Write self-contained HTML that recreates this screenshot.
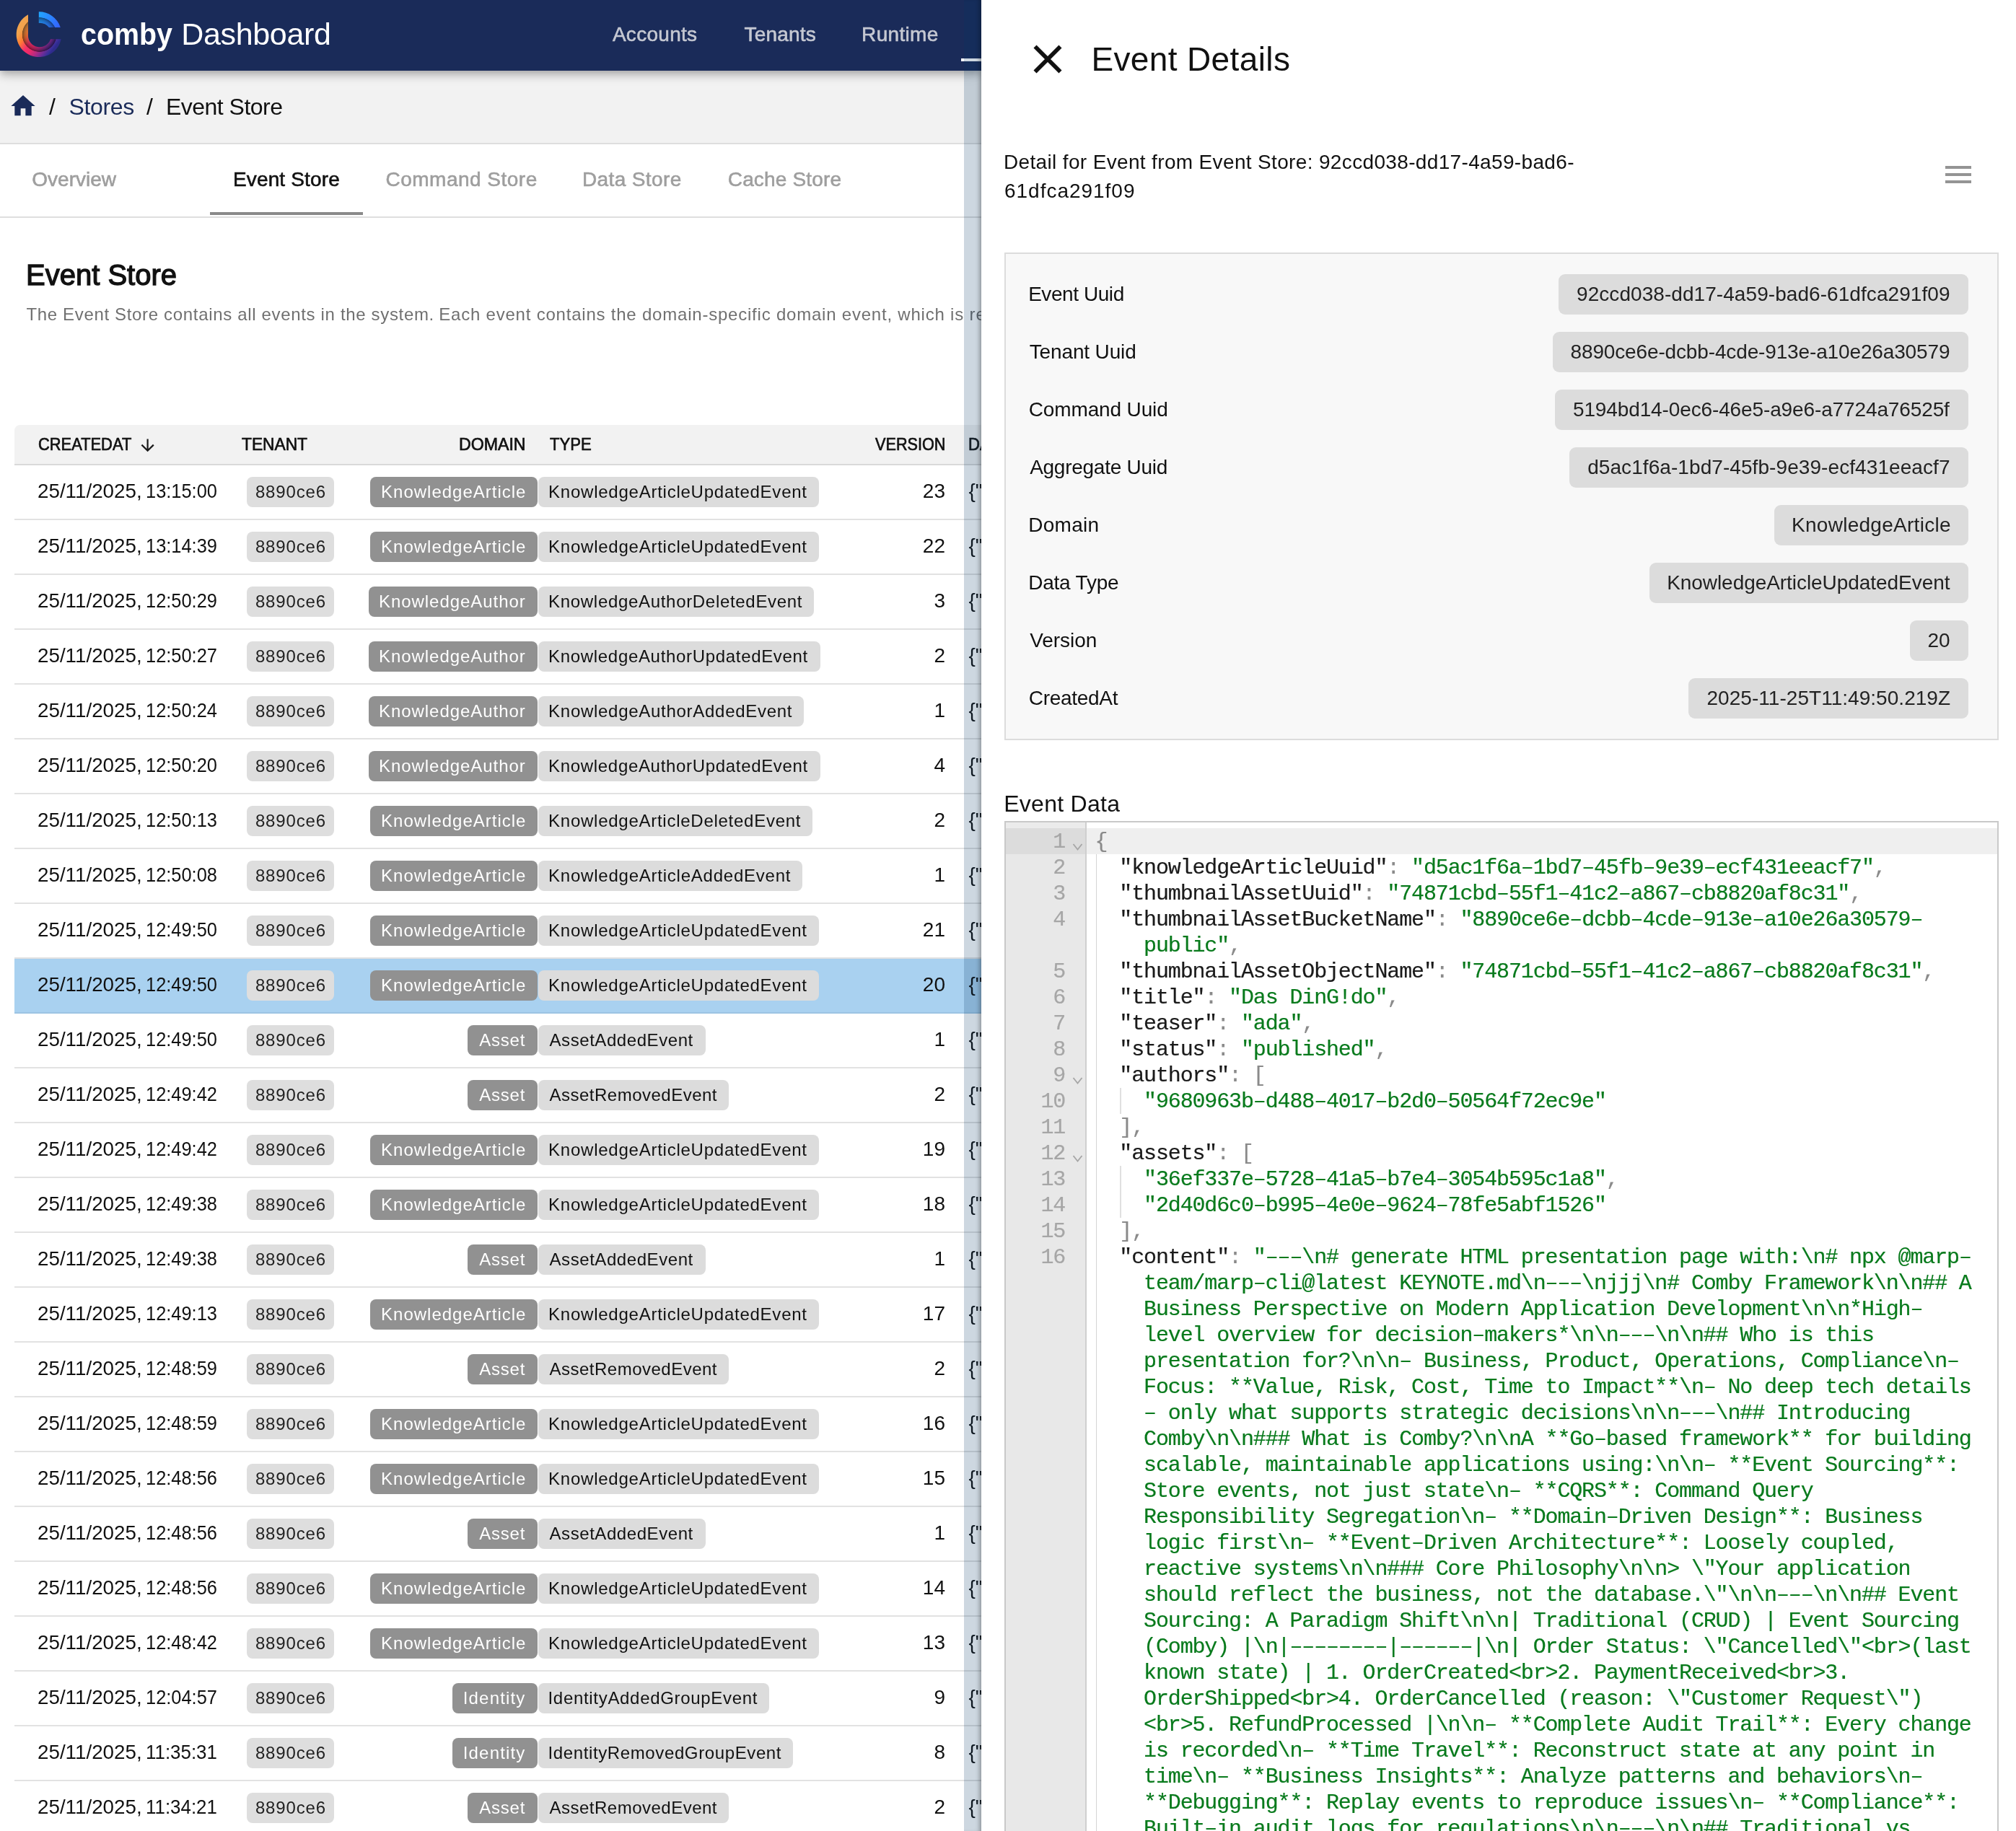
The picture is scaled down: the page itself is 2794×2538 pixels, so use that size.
<!DOCTYPE html>
<html><head><meta charset="utf-8"><title>comby Dashboard</title>
<style>
html,body{margin:0;padding:0}
body{width:2794px;height:2538px;overflow:hidden;position:relative;background:#fff;font-family:'Liberation Sans', sans-serif;}
#root{position:absolute;left:0;top:0;width:2794px;height:2538px;overflow:hidden;will-change:transform;}
</style></head><body><div id="root">
<div style="position:absolute;left:0;top:0;width:1360px;height:2538px;overflow:hidden">
<div style="position:absolute;left:0px;top:98px;width:1360px;height:100px;background:#f2f2f2;"></div>
<div style="position:absolute;left:0px;top:198px;width:1360px;height:2px;background:#dedede;"></div>
<div style="position:absolute;left:0px;top:300px;width:1360px;height:2px;background:#dedede;"></div>
<div style="position:absolute;left:0px;top:0px;width:1360px;height:98px;background:#1a2b59;box-shadow:0 4px 8px -2px rgba(0,0,0,.15),0 8px 10px 0 rgba(0,0,0,.12),0 2px 20px 0 rgba(0,0,0,.12);"></div>
<svg style="position:absolute;left:0;top:0" width="100" height="98" viewBox="0 0 100 98">
<defs>
<linearGradient id="g1" gradientUnits="userSpaceOnUse" x1="30.4" y1="22.8" x2="80" y2="60"><stop offset="0" stop-color="#f0a54f"/><stop offset=".17" stop-color="#f2a24c"/><stop offset=".32" stop-color="#ff7e33"/><stop offset=".49" stop-color="#f5306a"/><stop offset=".6" stop-color="#ee2a68"/><stop offset=".74" stop-color="#b52a84"/><stop offset=".875" stop-color="#6a2d98"/><stop offset=".97" stop-color="#35309a"/><stop offset="1" stop-color="#2f2b8c"/></linearGradient>
<linearGradient id="g2" gradientUnits="userSpaceOnUse" x1="54" y1="20" x2="84" y2="36"><stop offset="0" stop-color="#22a4ff"/><stop offset="1" stop-color="#3560ff"/></linearGradient>
<radialGradient id="g3" gradientUnits="userSpaceOnUse" cx="54.6" cy="48" r="24.2"><stop offset=".62" stop-color="#000" stop-opacity=".05"/><stop offset=".85" stop-color="#000" stop-opacity=".28"/><stop offset=".97" stop-color="#000" stop-opacity=".5"/><stop offset="1" stop-color="#000" stop-opacity="0"/></radialGradient>
<clipPath id="cp"><path d="M39 20.17A31.35 31.35 0 1 0 84.65 54.3L70.1 54.3A16 16 0 0 1 38.9 49.3Z"/><path d="M53.8 16.35A31.35 31.35 0 0 1 83.8 37.9L68 37.9A17.4 17.4 0 0 0 53.8 31.9Z"/></clipPath>
</defs>
<path d="M39 20.17A31.35 31.35 0 1 0 84.65 54.3L70.1 54.3A16 16 0 0 1 38.9 49.3Z" fill="url(#g1)"/>
<path d="M53.8 16.35A31.35 31.35 0 0 1 83.8 37.9L68 37.9A17.4 17.4 0 0 0 53.8 31.9Z" fill="url(#g2)"/>
<circle cx="54.6" cy="48" r="24.2" fill="url(#g3)" clip-path="url(#cp)"/>
</svg>
<span style="position:absolute;top:25.60px;font-size:43px;line-height:1;white-space:pre;color:#fff;left:111.86px;font-weight:700;transform:scaleX(0.9162);transform-origin:0 0;">comby</span>
<span style="position:absolute;top:25.60px;font-size:43px;line-height:1;white-space:pre;color:#fff;left:251.36px;letter-spacing:-0.357px;">Dashboard</span>
<span style="position:absolute;top:33.80px;font-size:28px;line-height:1;white-space:pre;color:#c5c8d2;left:848.88px;letter-spacing:0.293px;-webkit-text-stroke:0.6px #c5c8d2;">Accounts</span>
<span style="position:absolute;top:33.80px;font-size:28px;line-height:1;white-space:pre;color:#c5c8d2;left:1031.62px;letter-spacing:0.177px;-webkit-text-stroke:0.6px #c5c8d2;">Tenants</span>
<span style="position:absolute;top:33.80px;font-size:28px;line-height:1;white-space:pre;color:#c5c8d2;left:1194.12px;letter-spacing:0.329px;-webkit-text-stroke:0.6px #c5c8d2;">Runtime</span>
<div style="position:absolute;left:1332px;top:81px;width:28px;height:4px;background:#fff;"></div>
<svg style="position:absolute;left:12px;top:127px" width="40" height="40" viewBox="0 0 24 24"><path d="M10 20v-6h4v6h5v-8h3L12 3 2 12h3v8z" fill="#1a2b59"/></svg>
<span style="position:absolute;top:131.71px;font-size:32px;line-height:1;white-space:pre;color:#111;left:68.00px;">/</span>
<span style="position:absolute;top:131.71px;font-size:32px;line-height:1;white-space:pre;color:#1a2b59;left:95.38px;letter-spacing:-0.325px;">Stores</span>
<span style="position:absolute;top:131.71px;font-size:32px;line-height:1;white-space:pre;color:#111;left:203.00px;">/</span>
<span style="position:absolute;top:131.71px;font-size:32px;line-height:1;white-space:pre;color:#111;left:230.00px;letter-spacing:-0.518px;">Event Store</span>
<span style="position:absolute;top:234.60px;font-size:28px;line-height:1;white-space:pre;color:#9e9e9e;left:44.26px;letter-spacing:0.022px;-webkit-text-stroke:0.6px #9e9e9e;">Overview</span>
<span style="position:absolute;top:234.60px;font-size:28px;line-height:1;white-space:pre;color:#111;left:322.88px;letter-spacing:0.169px;-webkit-text-stroke:0.6px #111;">Event Store</span>
<span style="position:absolute;top:234.60px;font-size:28px;line-height:1;white-space:pre;color:#9e9e9e;left:534.52px;letter-spacing:0.488px;-webkit-text-stroke:0.6px #9e9e9e;">Command Store</span>
<span style="position:absolute;top:234.60px;font-size:28px;line-height:1;white-space:pre;color:#9e9e9e;left:807.00px;letter-spacing:0.377px;-webkit-text-stroke:0.6px #9e9e9e;">Data Store</span>
<span style="position:absolute;top:234.60px;font-size:28px;line-height:1;white-space:pre;color:#9e9e9e;left:1008.76px;letter-spacing:0.162px;-webkit-text-stroke:0.6px #9e9e9e;">Cache Store</span>
<div style="position:absolute;left:291px;top:294px;width:212px;height:4px;background:#8a8a8a;"></div>
<span style="position:absolute;top:361.24px;font-size:40px;line-height:1;white-space:pre;color:#111;left:36.00px;-webkit-text-stroke:1.3px #111;transform:scaleX(0.9999);transform-origin:0 0;">Event Store</span>
<span style="position:absolute;top:424.08px;font-size:24px;line-height:1;white-space:pre;color:#707070;left:36.38px;letter-spacing:0.666px;">The Event Store contains all events in the system.</span>
<span style="position:absolute;top:424.08px;font-size:24px;line-height:1;white-space:pre;color:#707070;left:608.26px;letter-spacing:0.786px;">Each event contains the domain-specific domain event, which is</span>
<span style="position:absolute;top:424.08px;font-size:24px;line-height:1;white-space:pre;color:#707070;left:1343.50px;letter-spacing:0.900px;">related to</span>
<div style="position:absolute;left:20px;top:589px;width:1340px;height:54px;background:#f2f2f2;border-radius:8px 0 0 0;"></div>
<div style="position:absolute;left:20px;top:643px;width:1340px;height:2px;background:#d9d9d9;"></div>
<span style="position:absolute;top:604.08px;font-size:24px;line-height:1;white-space:pre;color:#111;left:52.64px;-webkit-text-stroke:0.7px #111;transform:scaleX(0.9116);transform-origin:0 0;">CREATEDAT</span>
<svg style="position:absolute;left:190px;top:600px" width="30" height="32" viewBox="0 0 30 32"><path d="M14.6 8.5V24.6M6.4 16.6l8.2 8.2 8.2-8.2" fill="none" stroke="#1a1a1a" stroke-width="2.2"/></svg>
<span style="position:absolute;top:604.08px;font-size:24px;line-height:1;white-space:pre;color:#111;left:335.00px;-webkit-text-stroke:0.7px #111;transform:scaleX(0.9481);transform-origin:0 0;">TENANT</span>
<span style="position:absolute;top:604.08px;font-size:24px;line-height:1;white-space:pre;color:#111;left:635.62px;-webkit-text-stroke:0.7px #111;transform:scaleX(0.9638);transform-origin:0 0;">DOMAIN</span>
<span style="position:absolute;top:604.08px;font-size:24px;line-height:1;white-space:pre;color:#111;left:761.50px;-webkit-text-stroke:0.7px #111;transform:scaleX(0.9212);transform-origin:0 0;">TYPE</span>
<span style="position:absolute;top:604.08px;font-size:24px;line-height:1;white-space:pre;color:#111;left:1212.50px;-webkit-text-stroke:0.7px #111;transform:scaleX(0.9023);transform-origin:0 0;">VERSION</span>
<span style="position:absolute;top:604.08px;font-size:24px;line-height:1;white-space:pre;color:#111;left:1341.50px;-webkit-text-stroke:0.7px #111;transform:scaleX(0.92);transform-origin:0 0;">DATA</span>
<div style="position:absolute;left:20px;top:719px;width:1340px;height:2px;background:#e2e2e2;"></div>
<span style="position:absolute;top:666.80px;font-size:28px;line-height:1;white-space:pre;color:#111;left:51.72px;transform:scaleX(0.9917);transform-origin:0 0;">25/11/2025,</span>
<span style="position:absolute;top:666.80px;font-size:28px;line-height:1;white-space:pre;color:#111;left:201.86px;transform:scaleX(0.9073);transform-origin:0 0;">13:15:00</span>
<div style="position:absolute;left:342px;top:661px;width:121px;height:42px;background:#dedede;border-radius:8px;"></div>
<span style="position:absolute;top:670.18px;font-size:24px;line-height:1;white-space:pre;color:#222;left:353.88px;letter-spacing:0.841px;">8890ce6</span>
<div style="position:absolute;left:513.2px;top:661px;width:231.60000000000002px;height:42px;background:#919191;border-radius:8px;"></div>
<span style="position:absolute;top:670.18px;font-size:24px;line-height:1;white-space:pre;color:#fff;left:528.10px;letter-spacing:0.988px;">KnowledgeArticle</span>
<div style="position:absolute;left:745.6px;top:661px;width:389.1px;height:42px;background:#dcdcdc;border-radius:8px;"></div>
<span style="position:absolute;top:670.18px;font-size:24px;line-height:1;white-space:pre;color:#111;left:760.10px;letter-spacing:0.754px;">KnowledgeArticleUpdatedEvent</span>
<span style="position:absolute;top:666.80px;font-size:28px;line-height:1;white-space:pre;color:#111;right:50.00px;">23</span>
<span style="position:absolute;top:666.80px;font-size:28px;line-height:1;white-space:pre;color:#111;left:1342.50px;">{"</span>
<div style="position:absolute;left:20px;top:795px;width:1340px;height:2px;background:#e2e2e2;"></div>
<span style="position:absolute;top:742.80px;font-size:28px;line-height:1;white-space:pre;color:#111;left:51.72px;transform:scaleX(0.9917);transform-origin:0 0;">25/11/2025,</span>
<span style="position:absolute;top:742.80px;font-size:28px;line-height:1;white-space:pre;color:#111;left:201.86px;transform:scaleX(0.9073);transform-origin:0 0;">13:14:39</span>
<div style="position:absolute;left:342px;top:737px;width:121px;height:42px;background:#dedede;border-radius:8px;"></div>
<span style="position:absolute;top:746.18px;font-size:24px;line-height:1;white-space:pre;color:#222;left:353.88px;letter-spacing:0.841px;">8890ce6</span>
<div style="position:absolute;left:513.2px;top:737px;width:231.60000000000002px;height:42px;background:#919191;border-radius:8px;"></div>
<span style="position:absolute;top:746.18px;font-size:24px;line-height:1;white-space:pre;color:#fff;left:528.10px;letter-spacing:0.988px;">KnowledgeArticle</span>
<div style="position:absolute;left:745.6px;top:737px;width:389.1px;height:42px;background:#dcdcdc;border-radius:8px;"></div>
<span style="position:absolute;top:746.18px;font-size:24px;line-height:1;white-space:pre;color:#111;left:760.10px;letter-spacing:0.754px;">KnowledgeArticleUpdatedEvent</span>
<span style="position:absolute;top:742.80px;font-size:28px;line-height:1;white-space:pre;color:#111;right:50.00px;">22</span>
<span style="position:absolute;top:742.80px;font-size:28px;line-height:1;white-space:pre;color:#111;left:1342.50px;">{"</span>
<div style="position:absolute;left:20px;top:871px;width:1340px;height:2px;background:#e2e2e2;"></div>
<span style="position:absolute;top:818.80px;font-size:28px;line-height:1;white-space:pre;color:#111;left:51.72px;transform:scaleX(0.9917);transform-origin:0 0;">25/11/2025,</span>
<span style="position:absolute;top:818.80px;font-size:28px;line-height:1;white-space:pre;color:#111;left:201.86px;transform:scaleX(0.9073);transform-origin:0 0;">12:50:29</span>
<div style="position:absolute;left:342px;top:813px;width:121px;height:42px;background:#dedede;border-radius:8px;"></div>
<span style="position:absolute;top:822.18px;font-size:24px;line-height:1;white-space:pre;color:#222;left:353.88px;letter-spacing:0.841px;">8890ce6</span>
<div style="position:absolute;left:510.7px;top:813px;width:234.10000000000002px;height:42px;background:#919191;border-radius:8px;"></div>
<span style="position:absolute;top:822.18px;font-size:24px;line-height:1;white-space:pre;color:#fff;left:525.00px;letter-spacing:0.949px;">KnowledgeAuthor</span>
<div style="position:absolute;left:745.6px;top:813px;width:382.6px;height:42px;background:#dcdcdc;border-radius:8px;"></div>
<span style="position:absolute;top:822.18px;font-size:24px;line-height:1;white-space:pre;color:#111;left:760.10px;letter-spacing:0.686px;">KnowledgeAuthorDeletedEvent</span>
<span style="position:absolute;top:818.80px;font-size:28px;line-height:1;white-space:pre;color:#111;right:50.00px;">3</span>
<span style="position:absolute;top:818.80px;font-size:28px;line-height:1;white-space:pre;color:#111;left:1342.50px;">{"</span>
<div style="position:absolute;left:20px;top:947px;width:1340px;height:2px;background:#e2e2e2;"></div>
<span style="position:absolute;top:894.80px;font-size:28px;line-height:1;white-space:pre;color:#111;left:51.72px;transform:scaleX(0.9917);transform-origin:0 0;">25/11/2025,</span>
<span style="position:absolute;top:894.80px;font-size:28px;line-height:1;white-space:pre;color:#111;left:201.86px;transform:scaleX(0.9073);transform-origin:0 0;">12:50:27</span>
<div style="position:absolute;left:342px;top:889px;width:121px;height:42px;background:#dedede;border-radius:8px;"></div>
<span style="position:absolute;top:898.18px;font-size:24px;line-height:1;white-space:pre;color:#222;left:353.88px;letter-spacing:0.841px;">8890ce6</span>
<div style="position:absolute;left:510.7px;top:889px;width:234.10000000000002px;height:42px;background:#919191;border-radius:8px;"></div>
<span style="position:absolute;top:898.18px;font-size:24px;line-height:1;white-space:pre;color:#fff;left:525.00px;letter-spacing:0.949px;">KnowledgeAuthor</span>
<div style="position:absolute;left:745.6px;top:889px;width:391.0px;height:42px;background:#dcdcdc;border-radius:8px;"></div>
<span style="position:absolute;top:898.18px;font-size:24px;line-height:1;white-space:pre;color:#111;left:760.10px;letter-spacing:0.676px;">KnowledgeAuthorUpdatedEvent</span>
<span style="position:absolute;top:894.80px;font-size:28px;line-height:1;white-space:pre;color:#111;right:50.00px;">2</span>
<span style="position:absolute;top:894.80px;font-size:28px;line-height:1;white-space:pre;color:#111;left:1342.50px;">{"</span>
<div style="position:absolute;left:20px;top:1023px;width:1340px;height:2px;background:#e2e2e2;"></div>
<span style="position:absolute;top:970.80px;font-size:28px;line-height:1;white-space:pre;color:#111;left:51.72px;transform:scaleX(0.9917);transform-origin:0 0;">25/11/2025,</span>
<span style="position:absolute;top:970.80px;font-size:28px;line-height:1;white-space:pre;color:#111;left:201.86px;transform:scaleX(0.9073);transform-origin:0 0;">12:50:24</span>
<div style="position:absolute;left:342px;top:965px;width:121px;height:42px;background:#dedede;border-radius:8px;"></div>
<span style="position:absolute;top:974.18px;font-size:24px;line-height:1;white-space:pre;color:#222;left:353.88px;letter-spacing:0.841px;">8890ce6</span>
<div style="position:absolute;left:510.7px;top:965px;width:234.10000000000002px;height:42px;background:#919191;border-radius:8px;"></div>
<span style="position:absolute;top:974.18px;font-size:24px;line-height:1;white-space:pre;color:#fff;left:525.00px;letter-spacing:0.949px;">KnowledgeAuthor</span>
<div style="position:absolute;left:745.6px;top:965px;width:368.6px;height:42px;background:#dcdcdc;border-radius:8px;"></div>
<span style="position:absolute;top:974.18px;font-size:24px;line-height:1;white-space:pre;color:#111;left:760.10px;letter-spacing:0.715px;">KnowledgeAuthorAddedEvent</span>
<span style="position:absolute;top:970.80px;font-size:28px;line-height:1;white-space:pre;color:#111;right:50.00px;">1</span>
<span style="position:absolute;top:970.80px;font-size:28px;line-height:1;white-space:pre;color:#111;left:1342.50px;">{"</span>
<div style="position:absolute;left:20px;top:1099px;width:1340px;height:2px;background:#e2e2e2;"></div>
<span style="position:absolute;top:1046.80px;font-size:28px;line-height:1;white-space:pre;color:#111;left:51.72px;transform:scaleX(0.9917);transform-origin:0 0;">25/11/2025,</span>
<span style="position:absolute;top:1046.80px;font-size:28px;line-height:1;white-space:pre;color:#111;left:201.86px;transform:scaleX(0.9073);transform-origin:0 0;">12:50:20</span>
<div style="position:absolute;left:342px;top:1041px;width:121px;height:42px;background:#dedede;border-radius:8px;"></div>
<span style="position:absolute;top:1050.18px;font-size:24px;line-height:1;white-space:pre;color:#222;left:353.88px;letter-spacing:0.841px;">8890ce6</span>
<div style="position:absolute;left:510.7px;top:1041px;width:234.10000000000002px;height:42px;background:#919191;border-radius:8px;"></div>
<span style="position:absolute;top:1050.18px;font-size:24px;line-height:1;white-space:pre;color:#fff;left:525.00px;letter-spacing:0.949px;">KnowledgeAuthor</span>
<div style="position:absolute;left:745.6px;top:1041px;width:391.0px;height:42px;background:#dcdcdc;border-radius:8px;"></div>
<span style="position:absolute;top:1050.18px;font-size:24px;line-height:1;white-space:pre;color:#111;left:760.10px;letter-spacing:0.676px;">KnowledgeAuthorUpdatedEvent</span>
<span style="position:absolute;top:1046.80px;font-size:28px;line-height:1;white-space:pre;color:#111;right:50.00px;">4</span>
<span style="position:absolute;top:1046.80px;font-size:28px;line-height:1;white-space:pre;color:#111;left:1342.50px;">{"</span>
<div style="position:absolute;left:20px;top:1175px;width:1340px;height:2px;background:#e2e2e2;"></div>
<span style="position:absolute;top:1122.80px;font-size:28px;line-height:1;white-space:pre;color:#111;left:51.72px;transform:scaleX(0.9917);transform-origin:0 0;">25/11/2025,</span>
<span style="position:absolute;top:1122.80px;font-size:28px;line-height:1;white-space:pre;color:#111;left:201.86px;transform:scaleX(0.9073);transform-origin:0 0;">12:50:13</span>
<div style="position:absolute;left:342px;top:1117px;width:121px;height:42px;background:#dedede;border-radius:8px;"></div>
<span style="position:absolute;top:1126.18px;font-size:24px;line-height:1;white-space:pre;color:#222;left:353.88px;letter-spacing:0.841px;">8890ce6</span>
<div style="position:absolute;left:513.2px;top:1117px;width:231.60000000000002px;height:42px;background:#919191;border-radius:8px;"></div>
<span style="position:absolute;top:1126.18px;font-size:24px;line-height:1;white-space:pre;color:#fff;left:528.10px;letter-spacing:0.988px;">KnowledgeArticle</span>
<div style="position:absolute;left:745.6px;top:1117px;width:380.6px;height:42px;background:#dcdcdc;border-radius:8px;"></div>
<span style="position:absolute;top:1126.18px;font-size:24px;line-height:1;white-space:pre;color:#111;left:760.10px;letter-spacing:0.736px;">KnowledgeArticleDeletedEvent</span>
<span style="position:absolute;top:1122.80px;font-size:28px;line-height:1;white-space:pre;color:#111;right:50.00px;">2</span>
<span style="position:absolute;top:1122.80px;font-size:28px;line-height:1;white-space:pre;color:#111;left:1342.50px;">{"</span>
<div style="position:absolute;left:20px;top:1251px;width:1340px;height:2px;background:#e2e2e2;"></div>
<span style="position:absolute;top:1198.80px;font-size:28px;line-height:1;white-space:pre;color:#111;left:51.72px;transform:scaleX(0.9917);transform-origin:0 0;">25/11/2025,</span>
<span style="position:absolute;top:1198.80px;font-size:28px;line-height:1;white-space:pre;color:#111;left:201.86px;transform:scaleX(0.9073);transform-origin:0 0;">12:50:08</span>
<div style="position:absolute;left:342px;top:1193px;width:121px;height:42px;background:#dedede;border-radius:8px;"></div>
<span style="position:absolute;top:1202.18px;font-size:24px;line-height:1;white-space:pre;color:#222;left:353.88px;letter-spacing:0.841px;">8890ce6</span>
<div style="position:absolute;left:513.2px;top:1193px;width:231.60000000000002px;height:42px;background:#919191;border-radius:8px;"></div>
<span style="position:absolute;top:1202.18px;font-size:24px;line-height:1;white-space:pre;color:#fff;left:528.10px;letter-spacing:0.988px;">KnowledgeArticle</span>
<div style="position:absolute;left:745.6px;top:1193px;width:366.6px;height:42px;background:#dcdcdc;border-radius:8px;"></div>
<span style="position:absolute;top:1202.18px;font-size:24px;line-height:1;white-space:pre;color:#111;left:760.10px;letter-spacing:0.767px;">KnowledgeArticleAddedEvent</span>
<span style="position:absolute;top:1198.80px;font-size:28px;line-height:1;white-space:pre;color:#111;right:50.00px;">1</span>
<span style="position:absolute;top:1198.80px;font-size:28px;line-height:1;white-space:pre;color:#111;left:1342.50px;">{"</span>
<div style="position:absolute;left:20px;top:1327px;width:1340px;height:2px;background:#e2e2e2;"></div>
<span style="position:absolute;top:1274.80px;font-size:28px;line-height:1;white-space:pre;color:#111;left:51.72px;transform:scaleX(0.9917);transform-origin:0 0;">25/11/2025,</span>
<span style="position:absolute;top:1274.80px;font-size:28px;line-height:1;white-space:pre;color:#111;left:201.86px;transform:scaleX(0.9073);transform-origin:0 0;">12:49:50</span>
<div style="position:absolute;left:342px;top:1269px;width:121px;height:42px;background:#dedede;border-radius:8px;"></div>
<span style="position:absolute;top:1278.18px;font-size:24px;line-height:1;white-space:pre;color:#222;left:353.88px;letter-spacing:0.841px;">8890ce6</span>
<div style="position:absolute;left:513.2px;top:1269px;width:231.60000000000002px;height:42px;background:#919191;border-radius:8px;"></div>
<span style="position:absolute;top:1278.18px;font-size:24px;line-height:1;white-space:pre;color:#fff;left:528.10px;letter-spacing:0.988px;">KnowledgeArticle</span>
<div style="position:absolute;left:745.6px;top:1269px;width:389.1px;height:42px;background:#dcdcdc;border-radius:8px;"></div>
<span style="position:absolute;top:1278.18px;font-size:24px;line-height:1;white-space:pre;color:#111;left:760.10px;letter-spacing:0.754px;">KnowledgeArticleUpdatedEvent</span>
<span style="position:absolute;top:1274.80px;font-size:28px;line-height:1;white-space:pre;color:#111;right:50.00px;">21</span>
<span style="position:absolute;top:1274.80px;font-size:28px;line-height:1;white-space:pre;color:#111;left:1342.50px;">{"</span>
<div style="position:absolute;left:20px;top:1329px;width:1340px;height:76px;background:#a9d1f0;"></div>
<div style="position:absolute;left:20px;top:1403px;width:1340px;height:2px;background:#9cc3e3;"></div>
<span style="position:absolute;top:1350.80px;font-size:28px;line-height:1;white-space:pre;color:#111;left:51.72px;transform:scaleX(0.9917);transform-origin:0 0;">25/11/2025,</span>
<span style="position:absolute;top:1350.80px;font-size:28px;line-height:1;white-space:pre;color:#111;left:201.86px;transform:scaleX(0.9073);transform-origin:0 0;">12:49:50</span>
<div style="position:absolute;left:342px;top:1345px;width:121px;height:42px;background:#dedede;border-radius:8px;"></div>
<span style="position:absolute;top:1354.18px;font-size:24px;line-height:1;white-space:pre;color:#222;left:353.88px;letter-spacing:0.841px;">8890ce6</span>
<div style="position:absolute;left:513.2px;top:1345px;width:231.60000000000002px;height:42px;background:#919191;border-radius:8px;"></div>
<span style="position:absolute;top:1354.18px;font-size:24px;line-height:1;white-space:pre;color:#fff;left:528.10px;letter-spacing:0.988px;">KnowledgeArticle</span>
<div style="position:absolute;left:745.6px;top:1345px;width:389.1px;height:42px;background:#dcdcdc;border-radius:8px;"></div>
<span style="position:absolute;top:1354.18px;font-size:24px;line-height:1;white-space:pre;color:#111;left:760.10px;letter-spacing:0.754px;">KnowledgeArticleUpdatedEvent</span>
<span style="position:absolute;top:1350.80px;font-size:28px;line-height:1;white-space:pre;color:#111;right:50.00px;">20</span>
<span style="position:absolute;top:1350.80px;font-size:28px;line-height:1;white-space:pre;color:#111;left:1342.50px;">{"</span>
<div style="position:absolute;left:20px;top:1479px;width:1340px;height:2px;background:#e2e2e2;"></div>
<span style="position:absolute;top:1426.80px;font-size:28px;line-height:1;white-space:pre;color:#111;left:51.72px;transform:scaleX(0.9917);transform-origin:0 0;">25/11/2025,</span>
<span style="position:absolute;top:1426.80px;font-size:28px;line-height:1;white-space:pre;color:#111;left:201.86px;transform:scaleX(0.9073);transform-origin:0 0;">12:49:50</span>
<div style="position:absolute;left:342px;top:1421px;width:121px;height:42px;background:#dedede;border-radius:8px;"></div>
<span style="position:absolute;top:1430.18px;font-size:24px;line-height:1;white-space:pre;color:#222;left:353.88px;letter-spacing:0.841px;">8890ce6</span>
<div style="position:absolute;left:647.6px;top:1421px;width:97.2px;height:42px;background:#919191;border-radius:8px;"></div>
<span style="position:absolute;top:1430.18px;font-size:24px;line-height:1;white-space:pre;color:#fff;left:664.26px;letter-spacing:0.767px;">Asset</span>
<div style="position:absolute;left:745.6px;top:1421px;width:232.0px;height:42px;background:#dcdcdc;border-radius:8px;"></div>
<span style="position:absolute;top:1430.18px;font-size:24px;line-height:1;white-space:pre;color:#111;left:761.50px;letter-spacing:0.569px;">AssetAddedEvent</span>
<span style="position:absolute;top:1426.80px;font-size:28px;line-height:1;white-space:pre;color:#111;right:50.00px;">1</span>
<span style="position:absolute;top:1426.80px;font-size:28px;line-height:1;white-space:pre;color:#111;left:1342.50px;">{"</span>
<div style="position:absolute;left:20px;top:1555px;width:1340px;height:2px;background:#e2e2e2;"></div>
<span style="position:absolute;top:1502.80px;font-size:28px;line-height:1;white-space:pre;color:#111;left:51.72px;transform:scaleX(0.9917);transform-origin:0 0;">25/11/2025,</span>
<span style="position:absolute;top:1502.80px;font-size:28px;line-height:1;white-space:pre;color:#111;left:201.86px;transform:scaleX(0.9073);transform-origin:0 0;">12:49:42</span>
<div style="position:absolute;left:342px;top:1497px;width:121px;height:42px;background:#dedede;border-radius:8px;"></div>
<span style="position:absolute;top:1506.18px;font-size:24px;line-height:1;white-space:pre;color:#222;left:353.88px;letter-spacing:0.841px;">8890ce6</span>
<div style="position:absolute;left:647.6px;top:1497px;width:97.2px;height:42px;background:#919191;border-radius:8px;"></div>
<span style="position:absolute;top:1506.18px;font-size:24px;line-height:1;white-space:pre;color:#fff;left:664.26px;letter-spacing:0.767px;">Asset</span>
<div style="position:absolute;left:745.6px;top:1497px;width:264.6px;height:42px;background:#dcdcdc;border-radius:8px;"></div>
<span style="position:absolute;top:1506.18px;font-size:24px;line-height:1;white-space:pre;color:#111;left:761.50px;letter-spacing:0.493px;">AssetRemovedEvent</span>
<span style="position:absolute;top:1502.80px;font-size:28px;line-height:1;white-space:pre;color:#111;right:50.00px;">2</span>
<span style="position:absolute;top:1502.80px;font-size:28px;line-height:1;white-space:pre;color:#111;left:1342.50px;">{"</span>
<div style="position:absolute;left:20px;top:1631px;width:1340px;height:2px;background:#e2e2e2;"></div>
<span style="position:absolute;top:1578.80px;font-size:28px;line-height:1;white-space:pre;color:#111;left:51.72px;transform:scaleX(0.9917);transform-origin:0 0;">25/11/2025,</span>
<span style="position:absolute;top:1578.80px;font-size:28px;line-height:1;white-space:pre;color:#111;left:201.86px;transform:scaleX(0.9073);transform-origin:0 0;">12:49:42</span>
<div style="position:absolute;left:342px;top:1573px;width:121px;height:42px;background:#dedede;border-radius:8px;"></div>
<span style="position:absolute;top:1582.18px;font-size:24px;line-height:1;white-space:pre;color:#222;left:353.88px;letter-spacing:0.841px;">8890ce6</span>
<div style="position:absolute;left:513.2px;top:1573px;width:231.60000000000002px;height:42px;background:#919191;border-radius:8px;"></div>
<span style="position:absolute;top:1582.18px;font-size:24px;line-height:1;white-space:pre;color:#fff;left:528.10px;letter-spacing:0.988px;">KnowledgeArticle</span>
<div style="position:absolute;left:745.6px;top:1573px;width:389.1px;height:42px;background:#dcdcdc;border-radius:8px;"></div>
<span style="position:absolute;top:1582.18px;font-size:24px;line-height:1;white-space:pre;color:#111;left:760.10px;letter-spacing:0.754px;">KnowledgeArticleUpdatedEvent</span>
<span style="position:absolute;top:1578.80px;font-size:28px;line-height:1;white-space:pre;color:#111;right:50.00px;">19</span>
<span style="position:absolute;top:1578.80px;font-size:28px;line-height:1;white-space:pre;color:#111;left:1342.50px;">{"</span>
<div style="position:absolute;left:20px;top:1707px;width:1340px;height:2px;background:#e2e2e2;"></div>
<span style="position:absolute;top:1654.80px;font-size:28px;line-height:1;white-space:pre;color:#111;left:51.72px;transform:scaleX(0.9917);transform-origin:0 0;">25/11/2025,</span>
<span style="position:absolute;top:1654.80px;font-size:28px;line-height:1;white-space:pre;color:#111;left:201.86px;transform:scaleX(0.9073);transform-origin:0 0;">12:49:38</span>
<div style="position:absolute;left:342px;top:1649px;width:121px;height:42px;background:#dedede;border-radius:8px;"></div>
<span style="position:absolute;top:1658.18px;font-size:24px;line-height:1;white-space:pre;color:#222;left:353.88px;letter-spacing:0.841px;">8890ce6</span>
<div style="position:absolute;left:513.2px;top:1649px;width:231.60000000000002px;height:42px;background:#919191;border-radius:8px;"></div>
<span style="position:absolute;top:1658.18px;font-size:24px;line-height:1;white-space:pre;color:#fff;left:528.10px;letter-spacing:0.988px;">KnowledgeArticle</span>
<div style="position:absolute;left:745.6px;top:1649px;width:389.1px;height:42px;background:#dcdcdc;border-radius:8px;"></div>
<span style="position:absolute;top:1658.18px;font-size:24px;line-height:1;white-space:pre;color:#111;left:760.10px;letter-spacing:0.754px;">KnowledgeArticleUpdatedEvent</span>
<span style="position:absolute;top:1654.80px;font-size:28px;line-height:1;white-space:pre;color:#111;right:50.00px;">18</span>
<span style="position:absolute;top:1654.80px;font-size:28px;line-height:1;white-space:pre;color:#111;left:1342.50px;">{"</span>
<div style="position:absolute;left:20px;top:1783px;width:1340px;height:2px;background:#e2e2e2;"></div>
<span style="position:absolute;top:1730.80px;font-size:28px;line-height:1;white-space:pre;color:#111;left:51.72px;transform:scaleX(0.9917);transform-origin:0 0;">25/11/2025,</span>
<span style="position:absolute;top:1730.80px;font-size:28px;line-height:1;white-space:pre;color:#111;left:201.86px;transform:scaleX(0.9073);transform-origin:0 0;">12:49:38</span>
<div style="position:absolute;left:342px;top:1725px;width:121px;height:42px;background:#dedede;border-radius:8px;"></div>
<span style="position:absolute;top:1734.18px;font-size:24px;line-height:1;white-space:pre;color:#222;left:353.88px;letter-spacing:0.841px;">8890ce6</span>
<div style="position:absolute;left:647.6px;top:1725px;width:97.2px;height:42px;background:#919191;border-radius:8px;"></div>
<span style="position:absolute;top:1734.18px;font-size:24px;line-height:1;white-space:pre;color:#fff;left:664.26px;letter-spacing:0.767px;">Asset</span>
<div style="position:absolute;left:745.6px;top:1725px;width:232.0px;height:42px;background:#dcdcdc;border-radius:8px;"></div>
<span style="position:absolute;top:1734.18px;font-size:24px;line-height:1;white-space:pre;color:#111;left:761.50px;letter-spacing:0.569px;">AssetAddedEvent</span>
<span style="position:absolute;top:1730.80px;font-size:28px;line-height:1;white-space:pre;color:#111;right:50.00px;">1</span>
<span style="position:absolute;top:1730.80px;font-size:28px;line-height:1;white-space:pre;color:#111;left:1342.50px;">{"</span>
<div style="position:absolute;left:20px;top:1859px;width:1340px;height:2px;background:#e2e2e2;"></div>
<span style="position:absolute;top:1806.80px;font-size:28px;line-height:1;white-space:pre;color:#111;left:51.72px;transform:scaleX(0.9917);transform-origin:0 0;">25/11/2025,</span>
<span style="position:absolute;top:1806.80px;font-size:28px;line-height:1;white-space:pre;color:#111;left:201.86px;transform:scaleX(0.9073);transform-origin:0 0;">12:49:13</span>
<div style="position:absolute;left:342px;top:1801px;width:121px;height:42px;background:#dedede;border-radius:8px;"></div>
<span style="position:absolute;top:1810.18px;font-size:24px;line-height:1;white-space:pre;color:#222;left:353.88px;letter-spacing:0.841px;">8890ce6</span>
<div style="position:absolute;left:513.2px;top:1801px;width:231.60000000000002px;height:42px;background:#919191;border-radius:8px;"></div>
<span style="position:absolute;top:1810.18px;font-size:24px;line-height:1;white-space:pre;color:#fff;left:528.10px;letter-spacing:0.988px;">KnowledgeArticle</span>
<div style="position:absolute;left:745.6px;top:1801px;width:389.1px;height:42px;background:#dcdcdc;border-radius:8px;"></div>
<span style="position:absolute;top:1810.18px;font-size:24px;line-height:1;white-space:pre;color:#111;left:760.10px;letter-spacing:0.754px;">KnowledgeArticleUpdatedEvent</span>
<span style="position:absolute;top:1806.80px;font-size:28px;line-height:1;white-space:pre;color:#111;right:50.00px;">17</span>
<span style="position:absolute;top:1806.80px;font-size:28px;line-height:1;white-space:pre;color:#111;left:1342.50px;">{"</span>
<div style="position:absolute;left:20px;top:1935px;width:1340px;height:2px;background:#e2e2e2;"></div>
<span style="position:absolute;top:1882.80px;font-size:28px;line-height:1;white-space:pre;color:#111;left:51.72px;transform:scaleX(0.9917);transform-origin:0 0;">25/11/2025,</span>
<span style="position:absolute;top:1882.80px;font-size:28px;line-height:1;white-space:pre;color:#111;left:201.86px;transform:scaleX(0.9073);transform-origin:0 0;">12:48:59</span>
<div style="position:absolute;left:342px;top:1877px;width:121px;height:42px;background:#dedede;border-radius:8px;"></div>
<span style="position:absolute;top:1886.18px;font-size:24px;line-height:1;white-space:pre;color:#222;left:353.88px;letter-spacing:0.841px;">8890ce6</span>
<div style="position:absolute;left:647.6px;top:1877px;width:97.2px;height:42px;background:#919191;border-radius:8px;"></div>
<span style="position:absolute;top:1886.18px;font-size:24px;line-height:1;white-space:pre;color:#fff;left:664.26px;letter-spacing:0.767px;">Asset</span>
<div style="position:absolute;left:745.6px;top:1877px;width:264.6px;height:42px;background:#dcdcdc;border-radius:8px;"></div>
<span style="position:absolute;top:1886.18px;font-size:24px;line-height:1;white-space:pre;color:#111;left:761.50px;letter-spacing:0.493px;">AssetRemovedEvent</span>
<span style="position:absolute;top:1882.80px;font-size:28px;line-height:1;white-space:pre;color:#111;right:50.00px;">2</span>
<span style="position:absolute;top:1882.80px;font-size:28px;line-height:1;white-space:pre;color:#111;left:1342.50px;">{"</span>
<div style="position:absolute;left:20px;top:2011px;width:1340px;height:2px;background:#e2e2e2;"></div>
<span style="position:absolute;top:1958.80px;font-size:28px;line-height:1;white-space:pre;color:#111;left:51.72px;transform:scaleX(0.9917);transform-origin:0 0;">25/11/2025,</span>
<span style="position:absolute;top:1958.80px;font-size:28px;line-height:1;white-space:pre;color:#111;left:201.86px;transform:scaleX(0.9073);transform-origin:0 0;">12:48:59</span>
<div style="position:absolute;left:342px;top:1953px;width:121px;height:42px;background:#dedede;border-radius:8px;"></div>
<span style="position:absolute;top:1962.18px;font-size:24px;line-height:1;white-space:pre;color:#222;left:353.88px;letter-spacing:0.841px;">8890ce6</span>
<div style="position:absolute;left:513.2px;top:1953px;width:231.60000000000002px;height:42px;background:#919191;border-radius:8px;"></div>
<span style="position:absolute;top:1962.18px;font-size:24px;line-height:1;white-space:pre;color:#fff;left:528.10px;letter-spacing:0.988px;">KnowledgeArticle</span>
<div style="position:absolute;left:745.6px;top:1953px;width:389.1px;height:42px;background:#dcdcdc;border-radius:8px;"></div>
<span style="position:absolute;top:1962.18px;font-size:24px;line-height:1;white-space:pre;color:#111;left:760.10px;letter-spacing:0.754px;">KnowledgeArticleUpdatedEvent</span>
<span style="position:absolute;top:1958.80px;font-size:28px;line-height:1;white-space:pre;color:#111;right:50.00px;">16</span>
<span style="position:absolute;top:1958.80px;font-size:28px;line-height:1;white-space:pre;color:#111;left:1342.50px;">{"</span>
<div style="position:absolute;left:20px;top:2087px;width:1340px;height:2px;background:#e2e2e2;"></div>
<span style="position:absolute;top:2034.80px;font-size:28px;line-height:1;white-space:pre;color:#111;left:51.72px;transform:scaleX(0.9917);transform-origin:0 0;">25/11/2025,</span>
<span style="position:absolute;top:2034.80px;font-size:28px;line-height:1;white-space:pre;color:#111;left:201.86px;transform:scaleX(0.9073);transform-origin:0 0;">12:48:56</span>
<div style="position:absolute;left:342px;top:2029px;width:121px;height:42px;background:#dedede;border-radius:8px;"></div>
<span style="position:absolute;top:2038.18px;font-size:24px;line-height:1;white-space:pre;color:#222;left:353.88px;letter-spacing:0.841px;">8890ce6</span>
<div style="position:absolute;left:513.2px;top:2029px;width:231.60000000000002px;height:42px;background:#919191;border-radius:8px;"></div>
<span style="position:absolute;top:2038.18px;font-size:24px;line-height:1;white-space:pre;color:#fff;left:528.10px;letter-spacing:0.988px;">KnowledgeArticle</span>
<div style="position:absolute;left:745.6px;top:2029px;width:389.1px;height:42px;background:#dcdcdc;border-radius:8px;"></div>
<span style="position:absolute;top:2038.18px;font-size:24px;line-height:1;white-space:pre;color:#111;left:760.10px;letter-spacing:0.754px;">KnowledgeArticleUpdatedEvent</span>
<span style="position:absolute;top:2034.80px;font-size:28px;line-height:1;white-space:pre;color:#111;right:50.00px;">15</span>
<span style="position:absolute;top:2034.80px;font-size:28px;line-height:1;white-space:pre;color:#111;left:1342.50px;">{"</span>
<div style="position:absolute;left:20px;top:2163px;width:1340px;height:2px;background:#e2e2e2;"></div>
<span style="position:absolute;top:2110.80px;font-size:28px;line-height:1;white-space:pre;color:#111;left:51.72px;transform:scaleX(0.9917);transform-origin:0 0;">25/11/2025,</span>
<span style="position:absolute;top:2110.80px;font-size:28px;line-height:1;white-space:pre;color:#111;left:201.86px;transform:scaleX(0.9073);transform-origin:0 0;">12:48:56</span>
<div style="position:absolute;left:342px;top:2105px;width:121px;height:42px;background:#dedede;border-radius:8px;"></div>
<span style="position:absolute;top:2114.18px;font-size:24px;line-height:1;white-space:pre;color:#222;left:353.88px;letter-spacing:0.841px;">8890ce6</span>
<div style="position:absolute;left:647.6px;top:2105px;width:97.2px;height:42px;background:#919191;border-radius:8px;"></div>
<span style="position:absolute;top:2114.18px;font-size:24px;line-height:1;white-space:pre;color:#fff;left:664.26px;letter-spacing:0.767px;">Asset</span>
<div style="position:absolute;left:745.6px;top:2105px;width:232.0px;height:42px;background:#dcdcdc;border-radius:8px;"></div>
<span style="position:absolute;top:2114.18px;font-size:24px;line-height:1;white-space:pre;color:#111;left:761.50px;letter-spacing:0.569px;">AssetAddedEvent</span>
<span style="position:absolute;top:2110.80px;font-size:28px;line-height:1;white-space:pre;color:#111;right:50.00px;">1</span>
<span style="position:absolute;top:2110.80px;font-size:28px;line-height:1;white-space:pre;color:#111;left:1342.50px;">{"</span>
<div style="position:absolute;left:20px;top:2239px;width:1340px;height:2px;background:#e2e2e2;"></div>
<span style="position:absolute;top:2186.80px;font-size:28px;line-height:1;white-space:pre;color:#111;left:51.72px;transform:scaleX(0.9917);transform-origin:0 0;">25/11/2025,</span>
<span style="position:absolute;top:2186.80px;font-size:28px;line-height:1;white-space:pre;color:#111;left:201.86px;transform:scaleX(0.9073);transform-origin:0 0;">12:48:56</span>
<div style="position:absolute;left:342px;top:2181px;width:121px;height:42px;background:#dedede;border-radius:8px;"></div>
<span style="position:absolute;top:2190.18px;font-size:24px;line-height:1;white-space:pre;color:#222;left:353.88px;letter-spacing:0.841px;">8890ce6</span>
<div style="position:absolute;left:513.2px;top:2181px;width:231.60000000000002px;height:42px;background:#919191;border-radius:8px;"></div>
<span style="position:absolute;top:2190.18px;font-size:24px;line-height:1;white-space:pre;color:#fff;left:528.10px;letter-spacing:0.988px;">KnowledgeArticle</span>
<div style="position:absolute;left:745.6px;top:2181px;width:389.1px;height:42px;background:#dcdcdc;border-radius:8px;"></div>
<span style="position:absolute;top:2190.18px;font-size:24px;line-height:1;white-space:pre;color:#111;left:760.10px;letter-spacing:0.754px;">KnowledgeArticleUpdatedEvent</span>
<span style="position:absolute;top:2186.80px;font-size:28px;line-height:1;white-space:pre;color:#111;right:50.00px;">14</span>
<span style="position:absolute;top:2186.80px;font-size:28px;line-height:1;white-space:pre;color:#111;left:1342.50px;">{"</span>
<div style="position:absolute;left:20px;top:2315px;width:1340px;height:2px;background:#e2e2e2;"></div>
<span style="position:absolute;top:2262.80px;font-size:28px;line-height:1;white-space:pre;color:#111;left:51.72px;transform:scaleX(0.9917);transform-origin:0 0;">25/11/2025,</span>
<span style="position:absolute;top:2262.80px;font-size:28px;line-height:1;white-space:pre;color:#111;left:201.86px;transform:scaleX(0.9073);transform-origin:0 0;">12:48:42</span>
<div style="position:absolute;left:342px;top:2257px;width:121px;height:42px;background:#dedede;border-radius:8px;"></div>
<span style="position:absolute;top:2266.18px;font-size:24px;line-height:1;white-space:pre;color:#222;left:353.88px;letter-spacing:0.841px;">8890ce6</span>
<div style="position:absolute;left:513.2px;top:2257px;width:231.60000000000002px;height:42px;background:#919191;border-radius:8px;"></div>
<span style="position:absolute;top:2266.18px;font-size:24px;line-height:1;white-space:pre;color:#fff;left:528.10px;letter-spacing:0.988px;">KnowledgeArticle</span>
<div style="position:absolute;left:745.6px;top:2257px;width:389.1px;height:42px;background:#dcdcdc;border-radius:8px;"></div>
<span style="position:absolute;top:2266.18px;font-size:24px;line-height:1;white-space:pre;color:#111;left:760.10px;letter-spacing:0.754px;">KnowledgeArticleUpdatedEvent</span>
<span style="position:absolute;top:2262.80px;font-size:28px;line-height:1;white-space:pre;color:#111;right:50.00px;">13</span>
<span style="position:absolute;top:2262.80px;font-size:28px;line-height:1;white-space:pre;color:#111;left:1342.50px;">{"</span>
<div style="position:absolute;left:20px;top:2391px;width:1340px;height:2px;background:#e2e2e2;"></div>
<span style="position:absolute;top:2338.80px;font-size:28px;line-height:1;white-space:pre;color:#111;left:51.72px;transform:scaleX(0.9917);transform-origin:0 0;">25/11/2025,</span>
<span style="position:absolute;top:2338.80px;font-size:28px;line-height:1;white-space:pre;color:#111;left:201.86px;transform:scaleX(0.9073);transform-origin:0 0;">12:04:57</span>
<div style="position:absolute;left:342px;top:2333px;width:121px;height:42px;background:#dedede;border-radius:8px;"></div>
<span style="position:absolute;top:2342.18px;font-size:24px;line-height:1;white-space:pre;color:#222;left:353.88px;letter-spacing:0.841px;">8890ce6</span>
<div style="position:absolute;left:627.1px;top:2333px;width:117.7px;height:42px;background:#919191;border-radius:8px;"></div>
<span style="position:absolute;top:2342.18px;font-size:24px;line-height:1;white-space:pre;color:#fff;left:641.76px;letter-spacing:1.173px;">Identity</span>
<div style="position:absolute;left:745.6px;top:2333px;width:320.6px;height:42px;background:#dcdcdc;border-radius:8px;"></div>
<span style="position:absolute;top:2342.18px;font-size:24px;line-height:1;white-space:pre;color:#111;left:759.50px;letter-spacing:0.688px;">IdentityAddedGroupEvent</span>
<span style="position:absolute;top:2338.80px;font-size:28px;line-height:1;white-space:pre;color:#111;right:50.00px;">9</span>
<span style="position:absolute;top:2338.80px;font-size:28px;line-height:1;white-space:pre;color:#111;left:1342.50px;">{"</span>
<div style="position:absolute;left:20px;top:2467px;width:1340px;height:2px;background:#e2e2e2;"></div>
<span style="position:absolute;top:2414.80px;font-size:28px;line-height:1;white-space:pre;color:#111;left:51.72px;transform:scaleX(0.9917);transform-origin:0 0;">25/11/2025,</span>
<span style="position:absolute;top:2414.80px;font-size:28px;line-height:1;white-space:pre;color:#111;left:201.86px;transform:scaleX(0.9250);transform-origin:0 0;">11:35:31</span>
<div style="position:absolute;left:342px;top:2409px;width:121px;height:42px;background:#dedede;border-radius:8px;"></div>
<span style="position:absolute;top:2418.18px;font-size:24px;line-height:1;white-space:pre;color:#222;left:353.88px;letter-spacing:0.841px;">8890ce6</span>
<div style="position:absolute;left:627.1px;top:2409px;width:117.7px;height:42px;background:#919191;border-radius:8px;"></div>
<span style="position:absolute;top:2418.18px;font-size:24px;line-height:1;white-space:pre;color:#fff;left:641.76px;letter-spacing:1.173px;">Identity</span>
<div style="position:absolute;left:745.6px;top:2409px;width:353.6px;height:42px;background:#dcdcdc;border-radius:8px;"></div>
<span style="position:absolute;top:2418.18px;font-size:24px;line-height:1;white-space:pre;color:#111;left:759.50px;letter-spacing:0.618px;">IdentityRemovedGroupEvent</span>
<span style="position:absolute;top:2414.80px;font-size:28px;line-height:1;white-space:pre;color:#111;right:50.00px;">8</span>
<span style="position:absolute;top:2414.80px;font-size:28px;line-height:1;white-space:pre;color:#111;left:1342.50px;">{"</span>
<div style="position:absolute;left:20px;top:2543px;width:1340px;height:2px;background:#e2e2e2;"></div>
<span style="position:absolute;top:2490.80px;font-size:28px;line-height:1;white-space:pre;color:#111;left:51.72px;transform:scaleX(0.9917);transform-origin:0 0;">25/11/2025,</span>
<span style="position:absolute;top:2490.80px;font-size:28px;line-height:1;white-space:pre;color:#111;left:201.86px;transform:scaleX(0.9250);transform-origin:0 0;">11:34:21</span>
<div style="position:absolute;left:342px;top:2485px;width:121px;height:42px;background:#dedede;border-radius:8px;"></div>
<span style="position:absolute;top:2494.18px;font-size:24px;line-height:1;white-space:pre;color:#222;left:353.88px;letter-spacing:0.841px;">8890ce6</span>
<div style="position:absolute;left:647.6px;top:2485px;width:97.2px;height:42px;background:#919191;border-radius:8px;"></div>
<span style="position:absolute;top:2494.18px;font-size:24px;line-height:1;white-space:pre;color:#fff;left:664.26px;letter-spacing:0.767px;">Asset</span>
<div style="position:absolute;left:745.6px;top:2485px;width:264.6px;height:42px;background:#dcdcdc;border-radius:8px;"></div>
<span style="position:absolute;top:2494.18px;font-size:24px;line-height:1;white-space:pre;color:#111;left:761.50px;letter-spacing:0.493px;">AssetRemovedEvent</span>
<span style="position:absolute;top:2490.80px;font-size:28px;line-height:1;white-space:pre;color:#111;right:50.00px;">2</span>
<span style="position:absolute;top:2490.80px;font-size:28px;line-height:1;white-space:pre;color:#111;left:1342.50px;">{"</span>
</div>
<div style="position:absolute;left:1336px;top:0px;width:24px;height:2538px;background:rgba(5,55,100,0.2);box-shadow:inset -6px 0 6px -4px rgba(0,0,0,.35);"></div>
<div style="position:absolute;left:1360px;top:0px;width:1434px;height:2538px;background:#fff;"></div>
<svg style="position:absolute;left:1432px;top:62px" width="40" height="40" viewBox="0 0 40 40"><path d="M2.5 2.5L37.5 37.5M37.5 2.5L2.5 37.5" stroke="#111" stroke-width="5.7" fill="none"/></svg>
<span style="position:absolute;top:58.56px;font-size:46px;line-height:1;white-space:pre;color:#111;left:1512.38px;letter-spacing:0.374px;">Event Details</span>
<span style="position:absolute;top:211.00px;font-size:28px;line-height:1;white-space:pre;color:#111;left:1391.00px;letter-spacing:0.346px;">Detail for Event from Event Store: 92ccd038-dd17-4a59-bad6-</span>
<span style="position:absolute;top:250.50px;font-size:28px;line-height:1;white-space:pre;color:#111;left:1392.00px;letter-spacing:0.978px;">61dfca291f09</span>
<div style="position:absolute;left:2696px;top:230px;width:36px;height:4px;background:#949494;"></div>
<div style="position:absolute;left:2696px;top:240px;width:36px;height:4px;background:#949494;"></div>
<div style="position:absolute;left:2696px;top:250px;width:36px;height:4px;background:#949494;"></div>
<div style="position:absolute;left:1392px;top:350px;width:1378px;height:676px;background:#f8f8f8;box-sizing:border-box;border:2px solid #dcdcdc;"></div>
<span style="position:absolute;top:393.50px;font-size:28px;line-height:1;white-space:pre;color:#111;left:1425.14px;letter-spacing:-0.430px;">Event Uuid</span>
<div style="position:absolute;left:2160px;top:380.3px;width:567.8000000000002px;height:55.4px;background:#dcdcdc;border-radius:9px;"></div>
<span style="position:absolute;top:393.50px;font-size:28px;line-height:1;white-space:pre;color:#222;left:2185.00px;letter-spacing:0.062px;">92ccd038-dd17-4a59-bad6-61dfca291f09</span>
<span style="position:absolute;top:473.50px;font-size:28px;line-height:1;white-space:pre;color:#111;left:1426.74px;letter-spacing:-0.142px;">Tenant Uuid</span>
<div style="position:absolute;left:2151.8px;top:460.3px;width:576.0px;height:55.4px;background:#dcdcdc;border-radius:9px;"></div>
<span style="position:absolute;top:473.50px;font-size:28px;line-height:1;white-space:pre;color:#222;left:2176.52px;letter-spacing:-0.141px;">8890ce6e-dcbb-4cde-913e-a10e26a30579</span>
<span style="position:absolute;top:553.50px;font-size:28px;line-height:1;white-space:pre;color:#111;left:1425.74px;letter-spacing:-0.137px;">Command Uuid</span>
<div style="position:absolute;left:2154.7px;top:540.3px;width:573.1000000000004px;height:55.4px;background:#dcdcdc;border-radius:9px;"></div>
<span style="position:absolute;top:553.50px;font-size:28px;line-height:1;white-space:pre;color:#222;left:2179.98px;letter-spacing:-0.124px;">5194bd14-0ec6-46e5-a9e6-a7724a76525f</span>
<span style="position:absolute;top:633.50px;font-size:28px;line-height:1;white-space:pre;color:#111;left:1427.14px;letter-spacing:-0.257px;">Aggregate Uuid</span>
<div style="position:absolute;left:2175.1px;top:620.3px;width:552.7000000000003px;height:55.4px;background:#dcdcdc;border-radius:9px;"></div>
<span style="position:absolute;top:633.50px;font-size:28px;line-height:1;white-space:pre;color:#222;left:2200.14px;letter-spacing:0.075px;">d5ac1f6a-1bd7-45fb-9e39-ecf431eeacf7</span>
<span style="position:absolute;top:713.50px;font-size:28px;line-height:1;white-space:pre;color:#111;left:1425.14px;letter-spacing:0.295px;">Domain</span>
<div style="position:absolute;left:2459px;top:700.3px;width:268.8000000000002px;height:55.4px;background:#dcdcdc;border-radius:9px;"></div>
<span style="position:absolute;top:713.50px;font-size:28px;line-height:1;white-space:pre;color:#222;left:2483.00px;letter-spacing:0.277px;">KnowledgeArticle</span>
<span style="position:absolute;top:793.50px;font-size:28px;line-height:1;white-space:pre;color:#111;left:1425.14px;letter-spacing:-0.203px;">Data Type</span>
<div style="position:absolute;left:2286.1px;top:780.3px;width:441.7000000000003px;height:55.4px;background:#dcdcdc;border-radius:9px;"></div>
<span style="position:absolute;top:793.50px;font-size:28px;line-height:1;white-space:pre;color:#222;left:2310.14px;letter-spacing:-0.054px;">KnowledgeArticleUpdatedEvent</span>
<span style="position:absolute;top:873.50px;font-size:28px;line-height:1;white-space:pre;color:#111;left:1427.14px;letter-spacing:-0.048px;">Version</span>
<div style="position:absolute;left:2646.5px;top:860.3px;width:81.30000000000018px;height:55.4px;background:#dcdcdc;border-radius:9px;"></div>
<span style="position:absolute;top:873.50px;font-size:28px;line-height:1;white-space:pre;color:#222;left:2671.50px;letter-spacing:-0.156px;">20</span>
<span style="position:absolute;top:953.50px;font-size:28px;line-height:1;white-space:pre;color:#111;left:1425.74px;letter-spacing:-0.287px;">CreatedAt</span>
<div style="position:absolute;left:2340.2px;top:940.3px;width:387.60000000000036px;height:55.4px;background:#dcdcdc;border-radius:9px;"></div>
<span style="position:absolute;top:953.50px;font-size:28px;line-height:1;white-space:pre;color:#222;left:2365.48px;letter-spacing:0.037px;">2025-11-25T11:49:50.219Z</span>
<span style="position:absolute;top:1098.11px;font-size:32px;line-height:1;white-space:pre;color:#111;left:1391.24px;letter-spacing:0.272px;">Event Data</span>
<div style="position:absolute;left:1392px;top:1138px;width:1378px;height:1410px;background:#fff;box-sizing:border-box;border:2px solid #c9c9c9;"></div>
<div style="position:absolute;left:1394px;top:1140px;width:110px;height:1400px;background:#e8e8e8;"></div>
<div style="position:absolute;left:1394px;top:1140px;width:110px;height:8px;background:#ebebeb;"></div>
<div style="position:absolute;left:1504px;top:1140px;width:2px;height:1400px;background:#cfcfcf;"></div>
<div style="position:absolute;left:1394px;top:1148px;width:110px;height:36px;background:#dcdcdc;"></div>
<div style="position:absolute;left:1506px;top:1148px;width:1262px;height:36px;background:#efefef;"></div>
<div style="position:absolute;left:1518.5px;top:1184px;width:1.5px;height:1400px;background:#d4d4d4;"></div>
<div style="position:absolute;left:1552px;top:1508px;width:1.5px;height:36px;background:#e0e0e0;"></div>
<div style="position:absolute;left:1552px;top:1616px;width:1.5px;height:72px;background:#e0e0e0;"></div>
<div style="position:absolute;left:1392px;top:1141px;width:1376px;height:1398px;overflow:hidden;font-family:'Liberation Mono', monospace;font-size:30px;line-height:36px;white-space:pre;-webkit-text-stroke:0.2px;">
<span style="position:absolute;right:1291.86px;top:8px;color:#a6a6a6;letter-spacing:-1.140px">1</span>
<svg style="position:absolute;left:94px;top:27px" width="15" height="12" viewBox="0 0 15 12"><path d="M1.5 2L7.5 9.5L13.5 2" fill="none" stroke="#a6a6a6" stroke-width="1.8"/></svg>
<span style="position:absolute;left:125.59999999999991px;top:8px;letter-spacing:-1.140px"><span style="color:#8a8a8a">{</span></span>
<span style="position:absolute;right:1291.86px;top:44px;color:#a6a6a6;letter-spacing:-1.140px">2</span>
<span style="position:absolute;left:125.59999999999991px;top:44px;letter-spacing:-1.140px"><span style="color:#1a1a1a">  "knowledgeArticleUuid"</span><span style="color:#8a8a8a">: </span><span style="color:#087a1c">"d5ac1f6a–1bd7–45fb–9e39–ecf431eeacf7"</span><span style="color:#8a8a8a">,</span></span>
<span style="position:absolute;right:1291.86px;top:80px;color:#a6a6a6;letter-spacing:-1.140px">3</span>
<span style="position:absolute;left:125.59999999999991px;top:80px;letter-spacing:-1.140px"><span style="color:#1a1a1a">  "thumbnailAssetUuid"</span><span style="color:#8a8a8a">: </span><span style="color:#087a1c">"74871cbd–55f1–41c2–a867–cb8820af8c31"</span><span style="color:#8a8a8a">,</span></span>
<span style="position:absolute;right:1291.86px;top:116px;color:#a6a6a6;letter-spacing:-1.140px">4</span>
<span style="position:absolute;left:125.59999999999991px;top:116px;letter-spacing:-1.140px"><span style="color:#1a1a1a">  "thumbnailAssetBucketName"</span><span style="color:#8a8a8a">: </span><span style="color:#087a1c">"8890ce6e–dcbb–4cde–913e–a10e26a30579–</span></span>
<span style="position:absolute;left:125.59999999999991px;top:152px;letter-spacing:-1.140px"><span style="color:#087a1c">    public"</span><span style="color:#8a8a8a">,</span></span>
<span style="position:absolute;right:1291.86px;top:188px;color:#a6a6a6;letter-spacing:-1.140px">5</span>
<span style="position:absolute;left:125.59999999999991px;top:188px;letter-spacing:-1.140px"><span style="color:#1a1a1a">  "thumbnailAssetObjectName"</span><span style="color:#8a8a8a">: </span><span style="color:#087a1c">"74871cbd–55f1–41c2–a867–cb8820af8c31"</span><span style="color:#8a8a8a">,</span></span>
<span style="position:absolute;right:1291.86px;top:224px;color:#a6a6a6;letter-spacing:-1.140px">6</span>
<span style="position:absolute;left:125.59999999999991px;top:224px;letter-spacing:-1.140px"><span style="color:#1a1a1a">  "title"</span><span style="color:#8a8a8a">: </span><span style="color:#087a1c">"Das DinG!do"</span><span style="color:#8a8a8a">,</span></span>
<span style="position:absolute;right:1291.86px;top:260px;color:#a6a6a6;letter-spacing:-1.140px">7</span>
<span style="position:absolute;left:125.59999999999991px;top:260px;letter-spacing:-1.140px"><span style="color:#1a1a1a">  "teaser"</span><span style="color:#8a8a8a">: </span><span style="color:#087a1c">"ada"</span><span style="color:#8a8a8a">,</span></span>
<span style="position:absolute;right:1291.86px;top:296px;color:#a6a6a6;letter-spacing:-1.140px">8</span>
<span style="position:absolute;left:125.59999999999991px;top:296px;letter-spacing:-1.140px"><span style="color:#1a1a1a">  "status"</span><span style="color:#8a8a8a">: </span><span style="color:#087a1c">"published"</span><span style="color:#8a8a8a">,</span></span>
<span style="position:absolute;right:1291.86px;top:332px;color:#a6a6a6;letter-spacing:-1.140px">9</span>
<svg style="position:absolute;left:94px;top:351px" width="15" height="12" viewBox="0 0 15 12"><path d="M1.5 2L7.5 9.5L13.5 2" fill="none" stroke="#a6a6a6" stroke-width="1.8"/></svg>
<span style="position:absolute;left:125.59999999999991px;top:332px;letter-spacing:-1.140px"><span style="color:#1a1a1a">  "authors"</span><span style="color:#8a8a8a">: [</span></span>
<span style="position:absolute;right:1291.86px;top:368px;color:#a6a6a6;letter-spacing:-1.140px">10</span>
<span style="position:absolute;left:125.59999999999991px;top:368px;letter-spacing:-1.140px"><span style="color:#087a1c">    "9680963b–d488–4017–b2d0–50564f72ec9e"</span></span>
<span style="position:absolute;right:1291.86px;top:404px;color:#a6a6a6;letter-spacing:-1.140px">11</span>
<span style="position:absolute;left:125.59999999999991px;top:404px;letter-spacing:-1.140px"><span style="color:#8a8a8a">  ],</span></span>
<span style="position:absolute;right:1291.86px;top:440px;color:#a6a6a6;letter-spacing:-1.140px">12</span>
<svg style="position:absolute;left:94px;top:459px" width="15" height="12" viewBox="0 0 15 12"><path d="M1.5 2L7.5 9.5L13.5 2" fill="none" stroke="#a6a6a6" stroke-width="1.8"/></svg>
<span style="position:absolute;left:125.59999999999991px;top:440px;letter-spacing:-1.140px"><span style="color:#1a1a1a">  "assets"</span><span style="color:#8a8a8a">: [</span></span>
<span style="position:absolute;right:1291.86px;top:476px;color:#a6a6a6;letter-spacing:-1.140px">13</span>
<span style="position:absolute;left:125.59999999999991px;top:476px;letter-spacing:-1.140px"><span style="color:#087a1c">    "36ef337e–5728–41a5–b7e4–3054b595c1a8"</span><span style="color:#8a8a8a">,</span></span>
<span style="position:absolute;right:1291.86px;top:512px;color:#a6a6a6;letter-spacing:-1.140px">14</span>
<span style="position:absolute;left:125.59999999999991px;top:512px;letter-spacing:-1.140px"><span style="color:#087a1c">    "2d40d6c0–b995–4e0e–9624–78fe5abf1526"</span></span>
<span style="position:absolute;right:1291.86px;top:548px;color:#a6a6a6;letter-spacing:-1.140px">15</span>
<span style="position:absolute;left:125.59999999999991px;top:548px;letter-spacing:-1.140px"><span style="color:#8a8a8a">  ],</span></span>
<span style="position:absolute;right:1291.86px;top:584px;color:#a6a6a6;letter-spacing:-1.140px">16</span>
<span style="position:absolute;left:125.59999999999991px;top:584px;letter-spacing:-1.140px"><span style="color:#1a1a1a">  "content"</span><span style="color:#8a8a8a">: </span><span style="color:#087a1c">"–––\n# generate HTML presentation page with:\n# npx @marp–</span></span>
<span style="position:absolute;left:125.59999999999991px;top:620px;letter-spacing:-1.140px"><span style="color:#087a1c">    team/marp–cli@latest KEYNOTE.md\n–––\njjj\n# Comby Framework\n\n## A</span></span>
<span style="position:absolute;left:125.59999999999991px;top:656px;letter-spacing:-1.140px"><span style="color:#087a1c">    Business Perspective on Modern Application Development\n\n*High–</span></span>
<span style="position:absolute;left:125.59999999999991px;top:692px;letter-spacing:-1.140px"><span style="color:#087a1c">    level overview for decision–makers*\n\n–––\n\n## Who is this</span></span>
<span style="position:absolute;left:125.59999999999991px;top:728px;letter-spacing:-1.140px"><span style="color:#087a1c">    presentation for?\n\n– Business, Product, Operations, Compliance\n–</span></span>
<span style="position:absolute;left:125.59999999999991px;top:764px;letter-spacing:-1.140px"><span style="color:#087a1c">    Focus: **Value, Risk, Cost, Time to Impact**\n– No deep tech details</span></span>
<span style="position:absolute;left:125.59999999999991px;top:800px;letter-spacing:-1.140px"><span style="color:#087a1c">    – only what supports strategic decisions\n\n–––\n## Introducing</span></span>
<span style="position:absolute;left:125.59999999999991px;top:836px;letter-spacing:-1.140px"><span style="color:#087a1c">    Comby\n\n### What is Comby?\n\nA **Go–based framework** for building</span></span>
<span style="position:absolute;left:125.59999999999991px;top:872px;letter-spacing:-1.140px"><span style="color:#087a1c">    scalable, maintainable applications using:\n\n– **Event Sourcing**:</span></span>
<span style="position:absolute;left:125.59999999999991px;top:908px;letter-spacing:-1.140px"><span style="color:#087a1c">    Store events, not just state\n– **CQRS**: Command Query</span></span>
<span style="position:absolute;left:125.59999999999991px;top:944px;letter-spacing:-1.140px"><span style="color:#087a1c">    Responsibility Segregation\n– **Domain–Driven Design**: Business</span></span>
<span style="position:absolute;left:125.59999999999991px;top:980px;letter-spacing:-1.140px"><span style="color:#087a1c">    logic first\n– **Event–Driven Architecture**: Loosely coupled,</span></span>
<span style="position:absolute;left:125.59999999999991px;top:1016px;letter-spacing:-1.140px"><span style="color:#087a1c">    reactive systems\n\n### Core Philosophy\n\n&gt; \"Your application</span></span>
<span style="position:absolute;left:125.59999999999991px;top:1052px;letter-spacing:-1.140px"><span style="color:#087a1c">    should reflect the business, not the database.\"\n\n–––\n\n## Event</span></span>
<span style="position:absolute;left:125.59999999999991px;top:1088px;letter-spacing:-1.140px"><span style="color:#087a1c">    Sourcing: A Paradigm Shift\n\n| Traditional (CRUD) | Event Sourcing</span></span>
<span style="position:absolute;left:125.59999999999991px;top:1124px;letter-spacing:-1.140px"><span style="color:#087a1c">    (Comby) |\n|––––––––|––––––|\n| Order Status: \"Cancelled\"&lt;br&gt;(last</span></span>
<span style="position:absolute;left:125.59999999999991px;top:1160px;letter-spacing:-1.140px"><span style="color:#087a1c">    known state) | 1. OrderCreated&lt;br&gt;2. PaymentReceived&lt;br&gt;3.</span></span>
<span style="position:absolute;left:125.59999999999991px;top:1196px;letter-spacing:-1.140px"><span style="color:#087a1c">    OrderShipped&lt;br&gt;4. OrderCancelled (reason: \"Customer Request\")</span></span>
<span style="position:absolute;left:125.59999999999991px;top:1232px;letter-spacing:-1.140px"><span style="color:#087a1c">    &lt;br&gt;5. RefundProcessed |\n\n– **Complete Audit Trail**: Every change</span></span>
<span style="position:absolute;left:125.59999999999991px;top:1268px;letter-spacing:-1.140px"><span style="color:#087a1c">    is recorded\n– **Time Travel**: Reconstruct state at any point in</span></span>
<span style="position:absolute;left:125.59999999999991px;top:1304px;letter-spacing:-1.140px"><span style="color:#087a1c">    time\n– **Business Insights**: Analyze patterns and behaviors\n–</span></span>
<span style="position:absolute;left:125.59999999999991px;top:1340px;letter-spacing:-1.140px"><span style="color:#087a1c">    **Debugging**: Replay events to reproduce issues\n– **Compliance**:</span></span>
<span style="position:absolute;left:125.59999999999991px;top:1376px;letter-spacing:-1.140px"><span style="color:#087a1c">    Built–in audit logs for regulations\n\n–––\n\n## Traditional vs.</span></span>
</div>
</div></body></html>
